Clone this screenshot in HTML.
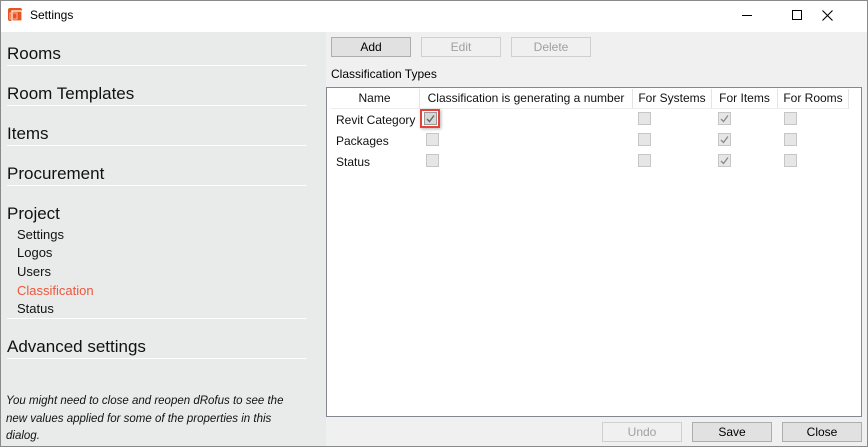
<!DOCTYPE html><html><head><style>
body{margin:0;width:868px;height:447px;overflow:hidden;font-family:"Segoe UI","Liberation Sans",sans-serif;position:relative;background:#fff}
.a{position:absolute}
.win{left:0;top:0;width:866px;height:445px;border:1px solid #8a8a8a}
.left{left:1px;top:32px;width:325px;height:414px;background:#e9ebea}
.right{left:326px;top:32px;width:541px;height:414px;background:#f0f0f0}
.h{position:absolute;left:6px;font-size:17px;color:#111}
.ln{position:absolute;left:6px;width:299px;height:1px;background:#fff}
.s{position:absolute;left:16px;font-size:13px;color:#111}
.btn{position:absolute;height:18px;border:1px solid #adadad;background:#e1e1e1;font-size:12px;text-align:center;line-height:18px;color:#000}
.dis{background:#f0f0f0;border-color:#cfcfcf;color:#a0a0a0}
.cb{position:absolute;width:11px;height:11px;border:1px solid #c6c6c6;background:#e6e6e6}
.cb svg{position:absolute;left:1px;top:1px}
.th{position:absolute;top:91px;font-size:12px;color:#111;text-align:center}
.sep{position:absolute;top:89px;width:1px;height:19px;background:#e4e4e4}
.td{position:absolute;left:336px;font-size:12px;color:#111}
</style></head><body>
<div class="a win"></div>
<svg class="a" style="left:8px;top:7px" width="16" height="16"><rect x="0" y="1" width="14" height="13" rx="2" fill="#e8541f"/><rect x="4" y="4" width="10" height="10" fill="none" stroke="#fff" stroke-width="1.2"/><rect x="2" y="6" width="7" height="6" fill="none" stroke="#f7b59a" stroke-width="1"/></svg>
<div class="a" style="left:30px;top:8px;font-size:12px">Settings</div>
<div class="a" style="left:742px;top:15px;width:10px;height:1px;background:#000"></div>
<div class="a" style="left:792px;top:10px;width:8px;height:8px;border:1px solid #000"></div>
<svg class="a" style="left:822px;top:10px" width="11" height="11"><path d="M0.5 0.5 L10.5 10.5 M10.5 0.5 L0.5 10.5" stroke="#000" stroke-width="1.1"/></svg>
<div class="a left">
<div class="h" style="top:12px">Rooms</div><div class="ln" style="top:33px"></div>
<div class="h" style="top:52px">Room Templates</div><div class="ln" style="top:73px"></div>
<div class="h" style="top:92px">Items</div><div class="ln" style="top:113px"></div>
<div class="h" style="top:132px">Procurement</div><div class="ln" style="top:153px"></div>
<div class="h" style="top:172px">Project</div>
<div class="s" style="top:195px">Settings</div>
<div class="s" style="top:213px">Logos</div>
<div class="s" style="top:232px">Users</div>
<div class="s" style="top:251px;color:#f0563a">Classification</div>
<div class="s" style="top:269px">Status</div>
<div class="ln" style="top:286px"></div>
<div class="h" style="top:305px">Advanced settings</div><div class="ln" style="top:326px"></div>
<div style="position:absolute;left:5px;top:361px;width:300px;font-size:11.5px;font-style:italic;line-height:17.5px;color:#111">You might need to close and reopen dRofus to see the new values applied for some of the properties in this dialog.</div>
</div>
<div class="a right"></div>
<div class="btn" style="left:331px;top:37px;width:78px">Add</div>
<div class="btn dis" style="left:421px;top:37px;width:78px">Edit</div>
<div class="btn dis" style="left:511px;top:37px;width:78px">Delete</div>
<div class="a" style="left:331px;top:67px;font-size:12px">Classification Types</div>
<div class="a" style="left:326px;top:87px;width:534px;height:328px;border:1px solid #828790;background:#fff"></div>
<div class="th" style="left:330px;width:89px">Name</div>
<div class="th" style="left:420px;width:212px">Classification is generating a number</div>
<div class="th" style="left:633px;width:78px">For Systems</div>
<div class="th" style="left:712px;width:65px">For Items</div>
<div class="th" style="left:778px;width:70px">For Rooms</div>
<div class="sep" style="left:419px"></div><div class="sep" style="left:632px"></div><div class="sep" style="left:711px"></div><div class="sep" style="left:777px"></div><div class="sep" style="left:848px"></div>
<div class="a" style="left:330px;top:108px;width:520px;height:1px;background:#eee"></div>
<div class="td" style="top:113px">Revit Category</div>
<div class="td" style="top:134px">Packages</div>
<div class="td" style="top:155px">Status</div>
<div class="a" style="left:420px;top:109px;width:20px;height:19px;border:2px solid #e8403a;box-sizing:border-box;box-shadow:1px 1px 3px rgba(0,0,0,.3)"></div>
<div class="cb" style="left:424px;top:112px;background:#d8d8d8;border-color:#9a9a9a"><svg width="9" height="9"><path d="M1 5 L3.5 7.5 L8 1.5" stroke="#666" stroke-width="1.4" fill="none"/></svg></div>
<div class="cb" style="left:426px;top:133px"></div>
<div class="cb" style="left:426px;top:154px"></div>
<div class="cb" style="left:638px;top:112px"></div><div class="cb" style="left:638px;top:133px"></div><div class="cb" style="left:638px;top:154px"></div>
<div class="cb" style="left:718px;top:112px"><svg width="9" height="9"><path d="M1 5 L3.5 7.5 L8 1.5" stroke="#888" stroke-width="1.3" fill="none"/></svg></div>
<div class="cb" style="left:718px;top:133px"><svg width="9" height="9"><path d="M1 5 L3.5 7.5 L8 1.5" stroke="#888" stroke-width="1.3" fill="none"/></svg></div>
<div class="cb" style="left:718px;top:154px"><svg width="9" height="9"><path d="M1 5 L3.5 7.5 L8 1.5" stroke="#888" stroke-width="1.3" fill="none"/></svg></div>
<div class="cb" style="left:784px;top:112px"></div><div class="cb" style="left:784px;top:133px"></div><div class="cb" style="left:784px;top:154px"></div>
<div class="btn dis" style="left:602px;top:422px;width:78px">Undo</div>
<div class="btn" style="left:692px;top:422px;width:78px">Save</div>
<div class="btn" style="left:782px;top:422px;width:78px">Close</div>
</body></html>
